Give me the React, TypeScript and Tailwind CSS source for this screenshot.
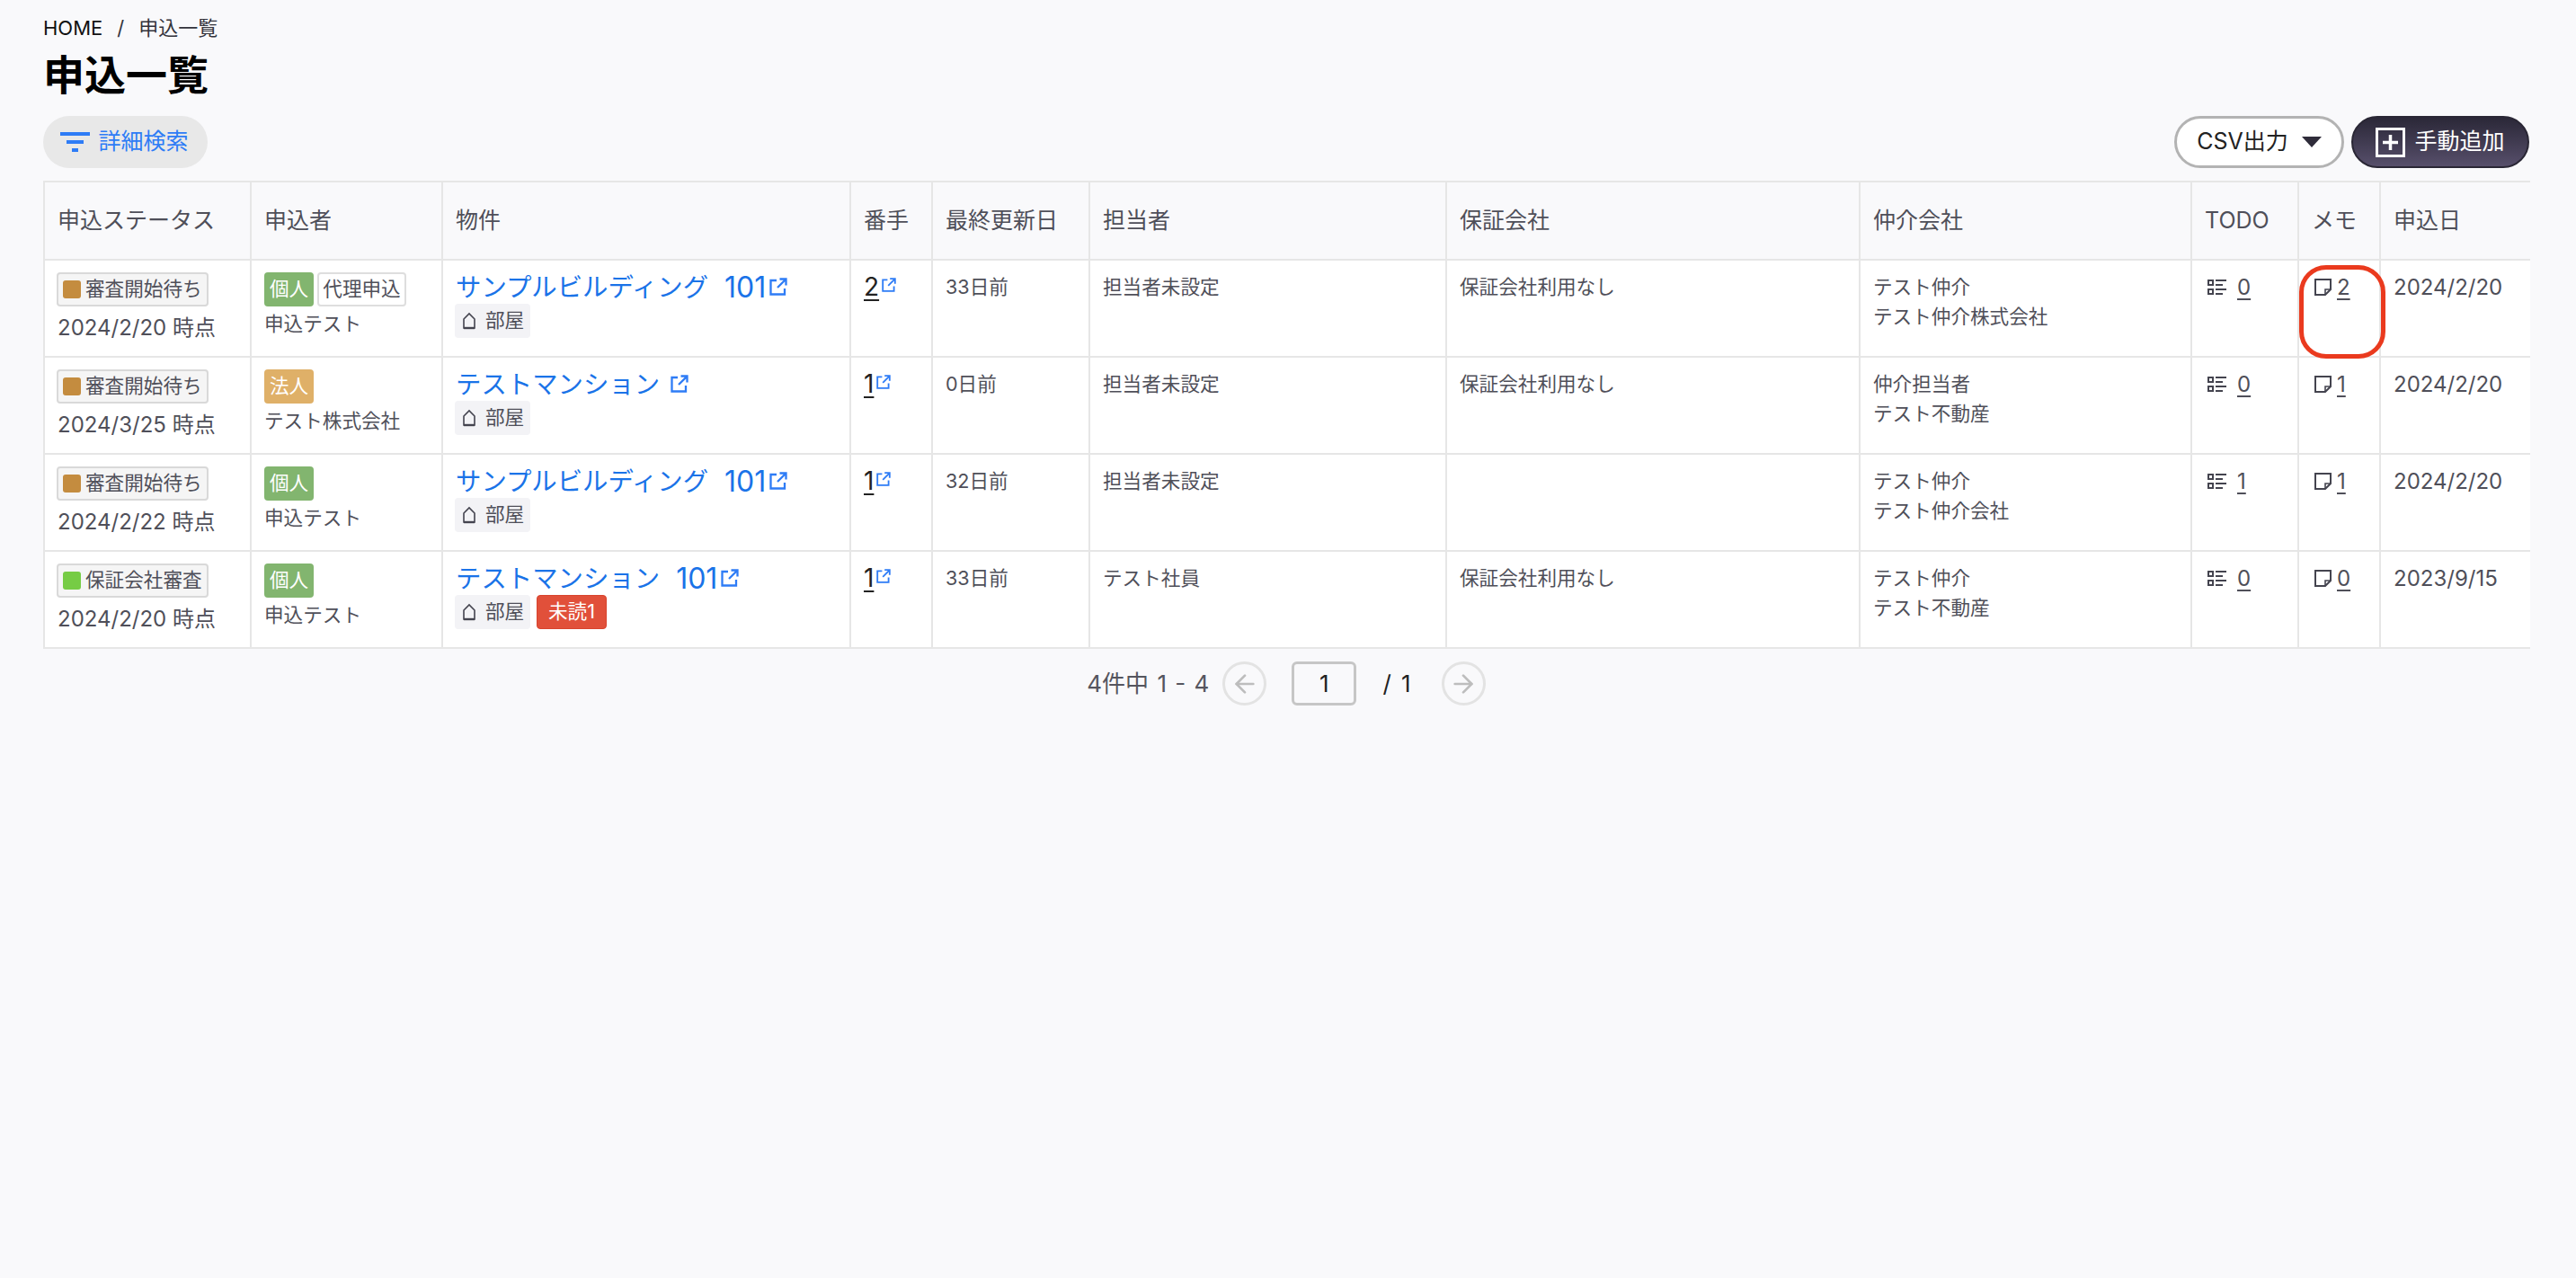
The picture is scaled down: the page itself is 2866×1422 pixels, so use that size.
import { ArrowLeft, ArrowRight } from "lucide-react";

type Row = {
  statusLabel: string;
  statusColor: string;
  statusDate: string;
  kind: "個人" | "法人";
  proxy?: boolean;
  applicant: string;
  property: string;
  room?: string;
  unread?: number;
  bidder: number;
  updated: string;
  staff: string;
  guarantor: string;
  agentLines: [string, string];
  todo: number;
  memo: number;
  appliedAt: string;
  highlightMemo?: boolean;
};

const rows: Row[] = [
  {
    statusLabel: "審査開始待ち",
    statusColor: "bg-[#c48c3f]",
    statusDate: "2024/2/20 時点",
    kind: "個人",
    proxy: true,
    applicant: "申込テスト",
    property: "サンプルビルディング",
    room: "101",
    bidder: 2,
    updated: "33日前",
    staff: "担当者未設定",
    guarantor: "保証会社利用なし",
    agentLines: ["テスト仲介", "テスト仲介株式会社"],
    todo: 0,
    memo: 2,
    appliedAt: "2024/2/20",
    highlightMemo: true,
  },
  {
    statusLabel: "審査開始待ち",
    statusColor: "bg-[#c48c3f]",
    statusDate: "2024/3/25 時点",
    kind: "法人",
    applicant: "テスト株式会社",
    property: "テストマンション",
    bidder: 1,
    updated: "0日前",
    staff: "担当者未設定",
    guarantor: "保証会社利用なし",
    agentLines: ["仲介担当者", "テスト不動産"],
    todo: 0,
    memo: 1,
    appliedAt: "2024/2/20",
  },
  {
    statusLabel: "審査開始待ち",
    statusColor: "bg-[#c48c3f]",
    statusDate: "2024/2/22 時点",
    kind: "個人",
    applicant: "申込テスト",
    property: "サンプルビルディング",
    room: "101",
    bidder: 1,
    updated: "32日前",
    staff: "担当者未設定",
    guarantor: "",
    agentLines: ["テスト仲介", "テスト仲介会社"],
    todo: 1,
    memo: 1,
    appliedAt: "2024/2/20",
  },
  {
    statusLabel: "保証会社審査",
    statusColor: "bg-[#76cc45]",
    statusDate: "2024/2/20 時点",
    kind: "個人",
    applicant: "申込テスト",
    property: "テストマンション",
    room: "101",
    unread: 1,
    bidder: 1,
    updated: "33日前",
    staff: "テスト社員",
    guarantor: "保証会社利用なし",
    agentLines: ["テスト仲介", "テスト不動産"],
    todo: 0,
    memo: 0,
    appliedAt: "2023/9/15",
  },
];

const headers = [
  { label: "申込ステータス", width: "w-[230px]" },
  { label: "申込者", width: "w-[213px]" },
  { label: "物件", width: "w-[454px]" },
  { label: "番手", width: "w-[91px]" },
  { label: "最終更新日", width: "w-[175px]" },
  { label: "担当者", width: "w-[397px]" },
  { label: "保証会社", width: "w-[460px]" },
  { label: "仲介会社", width: "w-[369px]" },
  { label: "TODO", width: "w-[119px]" },
  { label: "メモ", width: "w-[91px]" },
  { label: "申込日", width: "w-[167px]" },
];

function LinkIcon({ small }: { small?: boolean }) {
  return (
    <svg
      viewBox="0 0 20 20"
      className={`shrink-0 fill-none stroke-[#2e7cf6] stroke-[2.3] ${small ? "h-4 w-4" : "h-5 w-5"}`}
    >
      <path d="M8 3H1.5v15.5H17V12" />
      <path d="M9 11 18 2M11.5 1.5h7V8.5" />
    </svg>
  );
}

function HouseIcon() {
  return (
    <svg viewBox="0 0 16 20" className="h-5 w-4 shrink-0 fill-none stroke-[#44444f] stroke-[1.6]">
      <path d="M2 18V8l6-6 6 6v10z" />
      <path d="M2 18h12" strokeWidth="2.4" />
    </svg>
  );
}

function TodoIcon() {
  return (
    <svg viewBox="0 0 21 19" className="h-[19px] w-[21px] shrink-0 fill-none stroke-[#44444f] stroke-2">
      <rect x="1" y="2" width="5" height="5" />
      <rect x="1" y="12" width="5" height="5" />
      <path d="M9 2h12M9 7h8M9 12h12M9 17h8" />
    </svg>
  );
}

function MemoIcon() {
  return (
    <svg viewBox="0 0 19 19" className="h-[19px] w-[19px] shrink-0 fill-none stroke-[#44444f] stroke-2">
      <path d="M1 1h17v11l-6 6H1z" />
      <path d="M18 12h-6v6" strokeWidth="1.6" />
    </svg>
  );
}

function Chip({ children, className }: { children: React.ReactNode; className: string }) {
  return (
    <span className={`inline-flex h-[38px] items-center rounded-[4px] text-[21.6px] leading-none ${className}`}>
      {children}
    </span>
  );
}

const cell = "border-2 border-[#e6e6e6] align-top pl-[14px] pr-3 text-[21.6px] leading-[33px] text-[#4f4f59]";

export default function App() {
  return (
    <div className="min-h-screen bg-[#f9f9fb] pl-12 pr-[52px] pt-4 font-['Inter','Noto_Sans_CJK_JP',sans-serif]">
      <nav className="flex h-[30px] items-center text-[22px] leading-[30px] text-[#33333b]">
        <span className="text-[#111]">HOME</span>
        <span className="mx-[16px] text-[#33333b]">/</span>
        <span>申込一覧</span>
      </nav>
      <h1 className="mt-[7px] text-[46px] font-bold leading-[60px] text-black">申込一覧</h1>

      <div className="mt-4 flex items-center justify-between">
        <button className="flex h-[58px] w-[183px] items-center justify-center gap-[9px] rounded-full bg-[#e8e8e8] pr-[2px] text-[25px] text-[#2e7cf6]">
          <svg viewBox="0 0 33 22" className="h-[22px] w-[33px] fill-[#2e7cf6]">
            <rect x="0" y="0" width="33" height="4" />
            <rect x="7" y="9" width="19" height="4" />
            <rect x="13" y="18" width="7" height="4" />
          </svg>
          詳細検索
        </button>
        <div className="flex gap-2">
          <button className="flex h-[58px] w-[189px] items-center justify-center gap-[15px] rounded-full border-[3px] border-[#b3b3b3] bg-white text-[25px] text-[#222]">
            CSV出力
            <span className="h-0 w-0 border-x-[11px] border-t-[12px] border-x-transparent border-t-[#2f2c3a]" />
          </button>
          <button className="flex h-[58px] w-[198px] items-center justify-center gap-[10px] rounded-full border-2 border-[#2a2735] bg-gradient-to-b from-[#2b2838] to-[#574f6b] text-[25px] text-white">
            <svg viewBox="0 0 33 33" className="h-[33px] w-[33px] fill-none stroke-white">
              <rect x="1.5" y="1.5" width="30" height="30" strokeWidth="3" />
              <path d="M16.5 8v17M8 16.5h17" strokeWidth="3.5" />
            </svg>
            手動追加
          </button>
        </div>
      </div>

      <table className="mt-[14px] w-[2766px] table-fixed border-collapse">
        <colgroup>
          {headers.map((h) => (
            <col key={h.label} className={h.width} />
          ))}
        </colgroup>
        <thead>
          <tr className="h-[87px]">
            {headers.map((h, i) => (
              <th
                key={h.label}
                className={`border-2 border-[#e6e6e6] pl-[14px] pr-3 text-left text-[25px] font-normal text-[#4f4f59] ${
                  i === headers.length - 1 ? "border-r-0" : ""
                }`}
              >
                {h.label}
              </th>
            ))}
          </tr>
        </thead>
        <tbody>
          {rows.map((row, idx) => (
            <tr key={idx} className="h-[108px] bg-white">
              <td className={`${cell} pt-[13px]`}>
                <Chip className="w-[169px] -ml-[1px] gap-[5px] border-2 border-[#d9d9d9] bg-[#f5f5f5] pl-[5px]">
                  <span className={`h-5 w-5 rounded-[3px] ${row.statusColor}`} />
                  {row.statusLabel}
                </Chip>
                <div className="mt-[7px] whitespace-nowrap text-[24px] leading-[33px]">{row.statusDate}</div>
              </td>
              <td className={`${cell} pt-[13px]`}>
                <div className="flex gap-1">
                  <Chip
                    className={`w-[55px] justify-center text-white ${
                      row.kind === "個人" ? "bg-[#82b56f]" : "bg-[#dfb068]"
                    }`}
                  >
                    {row.kind}
                  </Chip>
                  {row.proxy && (
                    <Chip className="w-[99px] justify-center border-2 border-[#dedede] bg-white">代理申込</Chip>
                  )}
                </div>
                <div className="mt-[3px]">{row.applicant}</div>
              </td>
              <td className={`${cell} pt-[11px]`}>
                <a className="flex items-start text-[28.4px] leading-[38px] text-[#1a73e8]">
                  <span className="whitespace-nowrap">{row.property}</span>
                  <span className="ml-[18px] mr-[4px] text-[32px] empty:mr-0 empty:ml-3">{row.room}</span>
                  <span className="mt-[8px]">
                    <LinkIcon />
                  </span>
                </a>
                <div className="-mt-[1px] flex gap-[7px]">
                  <Chip className="-ml-[1px] h-[36px] w-[84px] gap-[10px] bg-[#f3f3f6] pl-[8px]">
                    <HouseIcon />
                    部屋
                  </Chip>
                  {row.unread !== undefined && (
                    <Chip className="h-[36px] w-[78px] justify-center border border-[#d8432d] bg-[#e1503a] text-white">
                      未読{row.unread}
                    </Chip>
                  )}
                </div>
              </td>
              <td className={`${cell} pt-[13px]`}>
                <div className="flex items-start">
                  <a className="text-[28px] leading-[33px] text-[#222] underline underline-offset-4">{row.bidder}</a>
                  <span className="ml-[3px] mt-[6px]">
                    <LinkIcon small />
                  </span>
                </div>
              </td>
              <td className={`${cell} pt-[13px]`}>{row.updated}</td>
              <td className={`${cell} pt-[13px]`}>{row.staff}</td>
              <td className={`${cell} pt-[13px]`}>{row.guarantor}</td>
              <td className={`${cell} pt-[13px]`}>
                <div>{row.agentLines[0]}</div>
                <div>{row.agentLines[1]}</div>
              </td>
              <td className={`${cell} pt-[13px]`}>
                <div className="ml-[3px] flex items-center gap-[12px]">
                  <TodoIcon />
                  <a className="text-[24px] leading-[33px] underline underline-offset-4">{row.todo}</a>
                </div>
              </td>
              <td className={`${cell} relative pt-[13px]`}>
                <div className="ml-[3px] flex items-center gap-[6px]">
                  <MemoIcon />
                  <a className="text-[24px] leading-[33px] underline underline-offset-4">{row.memo}</a>
                </div>
                {row.highlightMemo && (
                  <span className="pointer-events-none absolute top-[5px] left-0 h-[104px] w-[96px] rounded-[30px] border-[5px] border-[#ea3a1e]" />
                )}
              </td>
              <td className={`${cell} border-r-0 pt-[13px] text-[24px]`}>{row.appliedAt}</td>
            </tr>
          ))}
        </tbody>
      </table>

      <div className="mt-[14px] flex w-[2766px] items-center justify-center text-[26px] text-[#55555e] [word-spacing:2px]">
        <span>4件中 1 - 4</span>
        <button className="ml-[15px] flex h-[49px] w-[49px] items-center justify-center rounded-full border-[3px] border-[#e3e3e3]">
          <ArrowLeft className="h-8 w-8 text-[#bdbdbd]" strokeWidth={2} />
        </button>
        <div className="ml-[28px] flex h-[49px] w-[72px] items-center justify-center rounded-[6px] border-[3px] border-[#c6c6c6] text-[#222]">
          1
        </div>
        <span className="ml-[29px] text-[#222] [word-spacing:4px]">/ 1</span>
        <button className="ml-[34px] flex h-[49px] w-[49px] items-center justify-center rounded-full border-[3px] border-[#e3e3e3]">
          <ArrowRight className="h-8 w-8 text-[#bdbdbd]" strokeWidth={2} />
        </button>
      </div>
    </div>
  );
}
